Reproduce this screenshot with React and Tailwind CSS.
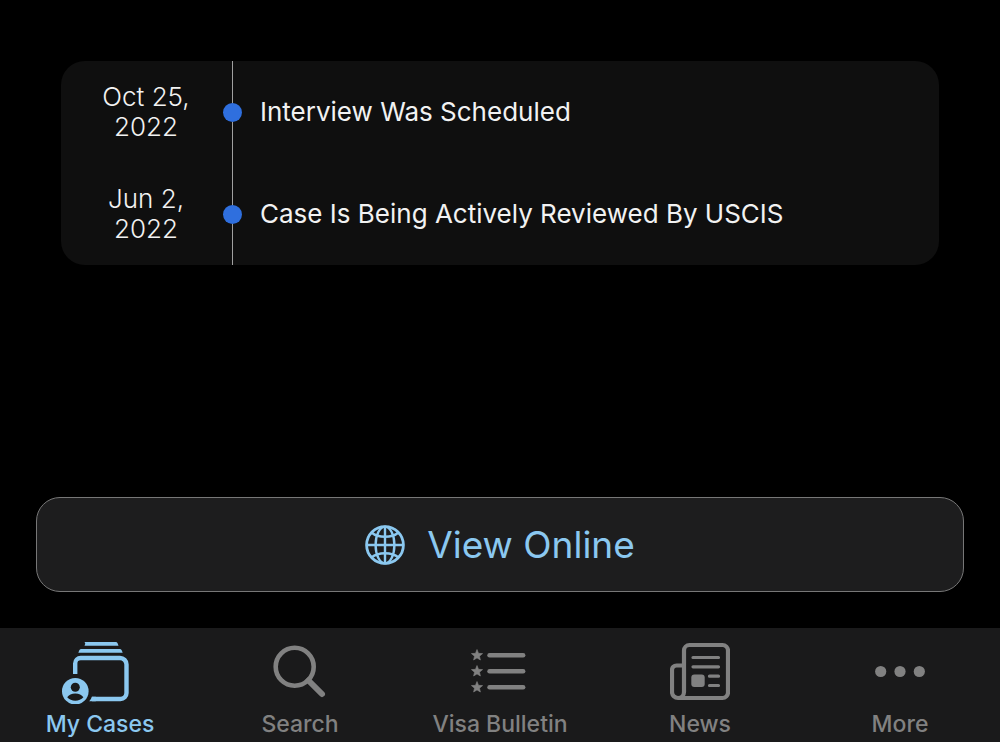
const events = [
  { date: 'Oct 25, 2022', title: 'Interview Was Scheduled' },
  { date: 'Jun 2, 2022', title: 'Case Is Being Actively Reviewed By USCIS' },
]

function GlobeIcon() {
  return (
    <svg viewBox="0 0 40 40" className="size-10" fill="none" stroke="currentColor" strokeWidth="2.4" aria-hidden="true">
      <circle cx="20" cy="20" r="18.4" strokeWidth="2.8" />
      <ellipse cx="20" cy="20" rx="9.4" ry="18.4" />
      <path d="M20 1.6v36.8M1.6 20h36.8" />
      <path d="M6.5 7.500c3.500 3 8 4.300 13.500 4.300S30 10.500 33.500 7.500M6.500 32.500c3.500-3 8-4.300 13.500-4.300S30 29.500 33.500 32.500" />
    </svg>
  )
}

function CasesIcon() {
  return (
    <svg viewBox="0 0 76 64" className="h-16 w-[76px]" fill="currentColor" aria-hidden="true">
      <path d="M23.500 2h30q1.700 0 2.200 1.400l.8 2.300h-34l.8-2.300Q21.800 2 23.500 2Z" />
      <path d="M19.500 9h38q1.700 0 2.300 1.400l.9 2.300H16.300l.9-2.300Q17.800 9 19.500 9Z" />
      <path
        d="M13.200 34V23.500a5.500 5.500 0 0 1 5.500-5.500h39.300a6.500 6.500 0 0 1 6.500 6.500v28.500a6 6 0 0 1-6 6H30"
        fill="none"
        stroke="currentColor"
        strokeWidth="4.400"
      />
      <path d="M27.200 61.200q2-1.900 2.600-4.400h4v4.400Z" />
      <circle cx="13.300" cy="51.200" r="13.300" />
      <circle cx="13.300" cy="47.300" r="4.500" className="fill-[#1a1a1b]" />
      <path d="M5.200 57.300c1.500-2.700 4.500-3.900 8.100-3.900s6.600 1.200 8.100 3.900c-2 2.300-4.900 3.500-8.100 3.500s-6.100-1.200-8.100-3.500Z" className="fill-[#1a1a1b]" />
    </svg>
  )
}

function SearchIcon() {
  return (
    <svg viewBox="0 0 54 64" className="h-16 w-[54px]" fill="none" stroke="currentColor" aria-hidden="true">
      <circle cx="21.700" cy="26.800" r="19" strokeWidth="4.600" />
      <path d="M35.500 40.500 49 54" strokeWidth="6" strokeLinecap="round" />
    </svg>
  )
}

function BulletinIcon() {
  return (
    <svg viewBox="0 0 58 64" className="h-16 w-[58px]" aria-hidden="true">
      {[15, 31, 47].map((y) => (
        <g key={y} transform={`translate(0 ${y})`}>
          <path
            d="M6-5.500 7.500-1.700 11.600-1.400 8.500 1.200 9.400 5 6 2.900 2.600 5 3.500 1.200.4-1.400 4.500-1.700Z"
            fill="currentColor"
            stroke="currentColor"
            strokeWidth=".6"
            strokeLinejoin="round"
          />
          <path d="M18.500.3h33.700" stroke="currentColor" strokeWidth="4.400" strokeLinecap="round" />
        </g>
      ))}
    </svg>
  )
}

function NewsIcon() {
  return (
    <svg viewBox="0 0 60 64" className="h-16 w-[60px]" fill="none" stroke="currentColor" strokeLinecap="round" aria-hidden="true">
      <path
        d="M14 52V10.500a5.500 5.500 0 0 1 5.500-5.500h33a5.500 5.500 0 0 1 5.500 5.500v42a5.500 5.500 0 0 1-5.500 5.500H8a6 6 0 0 1-6-6V30a4.500 4.500 0 0 1 4.500-4.500H14M14 50v2a6 6 0 0 1-6 6"
        strokeWidth="4.200"
      />
      <path d="M23 17.500h25.500M23 26.800h25.500M39.500 36.200h9M39.500 45.500h9" strokeWidth="3.200" />
      <rect x="21.300" y="34.500" width="13.400" height="12.600" rx="3" fill="currentColor" stroke="none" />
    </svg>
  )
}

function MoreIcon() {
  return (
    <svg viewBox="0 0 50 64" className="h-16 w-[50px]" fill="currentColor" aria-hidden="true">
      <circle cx="5.700" cy="31.500" r="5.600" />
      <circle cx="25" cy="31.500" r="5.600" />
      <circle cx="44.300" cy="31.500" r="5.600" />
    </svg>
  )
}

const tabs = [
  { label: 'My Cases', Icon: CasesIcon, active: true },
  { label: 'Search', Icon: SearchIcon },
  { label: 'Visa Bulletin', Icon: BulletinIcon },
  { label: 'News', Icon: NewsIcon },
  { label: 'More', Icon: MoreIcon },
]

function TimelineEvent({ date, title }) {
  return (
    <li className="flex min-h-[102px] items-stretch">
      <div className="flex w-[162px] shrink-0 items-center pr-6 pl-8 text-center text-[26px] leading-[30px] font-light">
        <time className="w-full">{date}</time>
      </div>
      <div className="flex w-[19px] shrink-0 flex-col items-center">
        <span className="w-px flex-1 bg-[#a0a0a0]" />
        <span className="size-[19px] rounded-full bg-[#2f6fde]" />
        <span className="w-px flex-1 bg-[#a0a0a0]" />
      </div>
      <p className="flex flex-1 items-center pr-6 pl-[18px] text-[26px] leading-[30px]">{title}</p>
    </li>
  )
}

export default function App() {
  return (
    <div className="flex min-h-screen flex-col bg-black font-['Inter',sans-serif] text-[#f2f2f2]">
      <main className="flex flex-1 flex-col justify-between px-9 pt-[61px] pb-9">
        <ol className="mx-[25px] overflow-hidden rounded-3xl bg-[#0f0f0f]">
          {events.map((event) => (
            <TimelineEvent key={event.title} {...event} />
          ))}
        </ol>
        <button
          type="button"
          className="flex h-[95px] w-full items-center justify-center gap-[22px] rounded-3xl border border-[#777] bg-[#1d1d1e] text-[37px] leading-[48px] text-[#8bc8f0]"
        >
          <GlobeIcon />
          View Online
        </button>
      </main>
      <nav className="grid grid-cols-5 bg-[#1a1a1b] pt-3 pb-1">
        {tabs.map(({ label, Icon, active }) => (
          <button
            key={label}
            type="button"
            aria-current={active ? 'page' : undefined}
            className={`flex flex-col items-center gap-1.5 text-[23px] leading-7 font-medium ${active ? 'text-[#8bc8f0]' : 'text-[#818181]'}`}
          >
            <Icon />
            {label}
          </button>
        ))}
      </nav>
    </div>
  )
}
